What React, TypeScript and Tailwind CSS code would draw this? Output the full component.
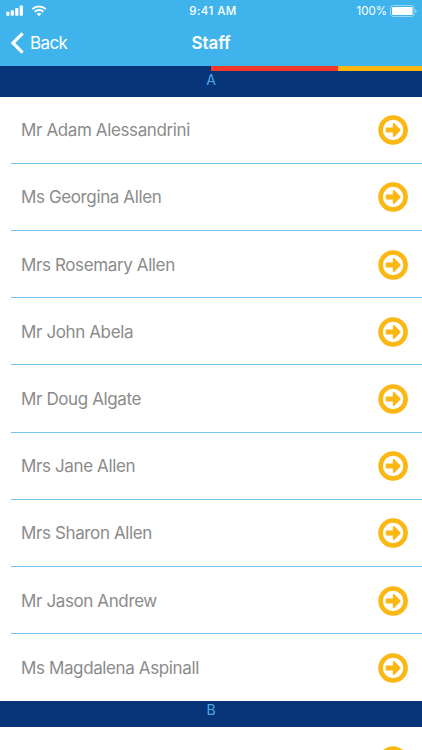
const sections = [
  {
    letter: "A",
    people: [
      "Mr Adam Alessandrini",
      "Ms Georgina Allen",
      "Mrs Rosemary Allen",
      "Mr John Abela",
      "Mr Doug Algate",
      "Mrs Jane Allen",
      "Mrs Sharon Allen",
      "Mr Jason Andrew",
      "Ms Magdalena Aspinall",
    ],
  },
  {
    letter: "B",
    people: [""],
  },
];

const SignalIcon = () => (
  <svg width="18" height="11" viewBox="0 0 18 11" fill="white">
    <rect x="0.2" y="6.7" width="3.2" height="4" rx="0.8" />
    <rect x="4.7" y="5.2" width="3.2" height="5.5" rx="0.8" />
    <rect x="9.2" y="3" width="3.2" height="7.7" rx="0.8" />
    <rect x="13.7" y="0.4" width="3.2" height="10.3" rx="0.8" />
  </svg>
);

const WifiIcon = () => (
  <svg width="16" height="12" viewBox="0 0 16 12" fill="none" stroke="white" strokeWidth="2">
    <path d="M1.3 4.1a9.6 9.6 0 0 1 13.4 0" />
    <path d="M3.7 6.7a6.1 6.1 0 0 1 8.6 0" />
    <path d="M8 11.2 5.7 8.8a3.3 3.3 0 0 1 4.6 0Z" fill="white" stroke="none" />
  </svg>
);

const BatteryIcon = () => (
  <svg width="27" height="12" viewBox="0 0 27 12">
    <rect x="0.5" y="0.5" width="23.6" height="11" rx="2.6" fill="none" stroke="white" strokeOpacity="0.45" />
    <rect x="2" y="2" width="20.6" height="8" rx="1" fill="white" />
    <path d="M25.2 4v4c.8-.3 1.3-1.1 1.3-2s-.5-1.7-1.3-2Z" fill="white" fillOpacity="0.5" />
  </svg>
);

const ArrowIcon = () => (
  <svg className="shrink-0" width="30" height="30" viewBox="0 0 30 30">
    <circle cx="15.1" cy="15" r="12.5" fill="none" stroke="#fbb713" strokeWidth="4.6" />
    <path
      d="M8.6 12.4h6.2V9c0-1 .8-1.3 1.5-.7l6 5.9c.5.5.5 1.1 0 1.6l-6 5.9c-.7.6-1.5.3-1.5-.7v-3.4H8.6c-.6 0-.9-.3-.9-.9v-3.4c0-.6.3-.9.9-.9Z"
      fill="#fbb713"
    />
  </svg>
);

const StaffRow = ({ name, last }: { name: string; last: boolean }) => (
  <li
    className={`ml-[11px] flex h-[67.2px] items-center justify-between pl-[10px] pr-[14px] pt-[1px] ${
      last ? "" : "border-b border-[#76c6eb]"
    }`}
  >
    <span className="pt-[1.5px] text-[17px] tracking-[-0.38px] text-[#8b8b8b]">{name}</span>
    <ArrowIcon />
  </li>
);

const App = () => {
  return (
    <div className="h-[750px] overflow-hidden bg-white font-['Inter','Liberation_Sans',sans-serif]">
      <header className="h-[65.6px] bg-[#3fb4ec] text-white">
        {/* Status bar */}
        <div className="grid h-[21px] grid-cols-3 items-center pl-[6px] pr-[5px] text-[11.5px] leading-none">
          <div className="flex items-center gap-[7px]">
            <SignalIcon />
            <WifiIcon />
          </div>
          <span className="pl-[3px] pt-[2px] text-center font-medium tracking-[0.45px]">9:41 AM</span>
          <div className="flex items-center justify-end gap-[3px]">
            <span className="pt-[2px]">100%</span>
            <BatteryIcon />
          </div>
        </div>

        {/* Navigation */}
        <div className="grid h-[44px] grid-cols-3 items-center">
          <button className="flex items-center gap-[6px] pl-[10px] text-[17px]">
            <svg width="14" height="22" viewBox="0 0 14 22" fill="none" stroke="white" strokeWidth="3.2">
              <path d="M12.6 1.3 2.9 11l9.7 9.7" />
            </svg>
            <span className="pt-[2px] tracking-[-0.6px]">Back</span>
          </button>
          <h1 className="pt-[2px] text-center text-[17px] font-semibold tracking-[-0.1px]">Staff</h1>
        </div>
      </header>

      {/* School colours */}
      <div className="flex h-[5px]">
        <div className="w-[50%] bg-[#073478]" />
        <div className="w-[30%] bg-[#f2382b]" />
        <div className="w-[20%] bg-[#fbb90f]" />
      </div>

      {sections.map((section) => (
        <section key={section.letter}>
          <h2 className="h-[26px] bg-[#073478] text-center text-[14px] leading-[17px] text-[#4aa9e6]">
            {section.letter}
          </h2>
          <ul>
            {section.people.map((name, i) => (
              <StaffRow key={i} name={name} last={i === section.people.length - 1} />
            ))}
          </ul>
        </section>
      ))}
    </div>
  );
};

export default App;
